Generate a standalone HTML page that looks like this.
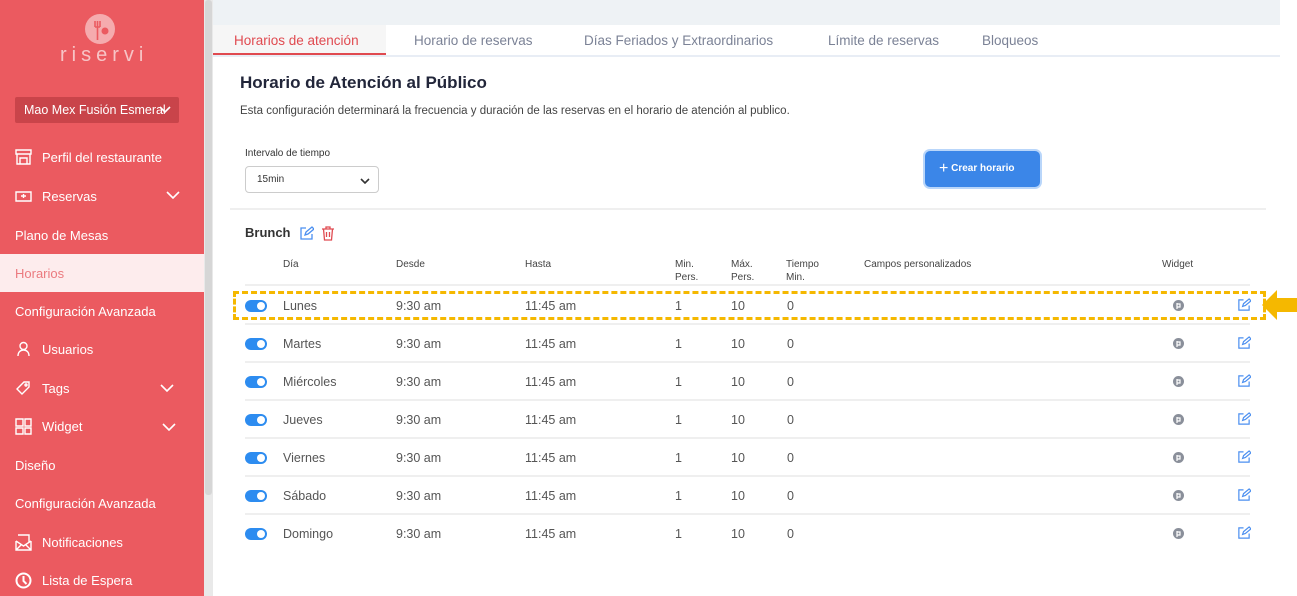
<!DOCTYPE html>
<html><head><meta charset="utf-8"><style>
*{box-sizing:border-box;margin:0;padding:0}
body{width:1297px;height:596px;overflow:hidden;background:#fff;font-family:"Liberation Sans",sans-serif;position:relative;color:#2b2d42}
.sb{position:absolute;left:0;top:0;width:204px;height:596px;background:#eb5a60}
.abs{position:absolute}
.si{position:absolute;left:15px;color:#fff;font-size:13px;display:flex;align-items:center;height:20px}
.si svg{margin-right:10px}
.chev{position:absolute;left:166px;}
.scr{position:absolute;left:204px;top:0;width:9px;height:596px;background:#e9e9e9}
.top{position:absolute;left:213px;top:0;width:1067px;height:25px;background:#eef2f5}
.tab{position:absolute;top:33px;font-size:13.5px;color:#7b8296}
.row{position:absolute;left:245px;width:1005px;height:38px;border-bottom:2px solid #efefef;font-size:12.5px;color:#555}
.row.last{border-bottom:none}
.row span{position:absolute;top:12px}
.tg{position:absolute;left:0;top:13px;width:22px;height:12px;border-radius:6px;background:#2d8cf0}
.tg:after{content:"";position:absolute;right:2px;top:2px;width:8px;height:8px;border-radius:50%;background:#fff}
.th{position:absolute;font-size:10px;color:#444;line-height:13px}
</style></head><body>
<div class="sb">
 <svg class="abs" style="left:85px;top:14px" width="30" height="30" viewBox="0 0 30 30"><circle cx="15" cy="15" r="15" fill="#f5abae"/><path d="M10 7v6M12.5 7v6M15 7v6M10 13h5M12.5 13v13" stroke="#eb5a60" stroke-width="1.6" fill="none"/><circle cx="20" cy="17" r="3.5" fill="#eb5a60"/></svg>
 <div class="abs" style="left:60px;top:44px;color:#f7c4c6;font-size:20px;letter-spacing:5px">riservi</div>
 <div class="abs" style="left:15px;top:97px;width:164px;height:26px;background:#c9444a;border-radius:2px;color:#fff;font-size:12.5px;line-height:26px;padding-left:9px;white-space:nowrap;overflow:hidden">Mao Mex Fusión Esmeral<svg style="position:absolute;right:8px;top:9px" width="12" height="8"><path d="M1 1l5 5 5-5" stroke="#fff" stroke-width="1.6" fill="none"/></svg></div>
 <div class="si" style="top:147px"><svg width="17" height="16" viewBox="0 0 17 16" fill="none" stroke="#fff" stroke-width="1.4"><path d="M1 1h15v4H1zM2 5v10h13V5M5 9h7v6H5z"/></svg>Perfil del restaurante</div>
 <div class="si" style="top:186px"><svg width="17" height="14" viewBox="0 0 17 14" fill="none" stroke="#fff" stroke-width="1.4"><path d="M1 3h15v9H1zM6 7h5M8.5 5v4"/></svg>Reservas</div>
 <svg class="chev" style="top:191px" width="14" height="8"><path d="M1 1l6 6 6-6" stroke="#fff" stroke-width="1.6" fill="none"/></svg>
 <div class="si" style="top:225px">Plano de Mesas</div>
 <div class="abs" style="left:0;top:254px;width:204px;height:38px;background:#fdeced"></div>
 <div class="si" style="top:263px;color:#eb7a7f">Horarios</div>
 <div class="si" style="top:301px">Configuración Avanzada</div>
 <div class="si" style="top:339px"><svg width="17" height="16" viewBox="0 0 17 16" fill="none" stroke="#fff" stroke-width="1.4"><circle cx="8.5" cy="5" r="3.5"/><path d="M3 15c0-4 2.5-6 5.5-6s5.5 2 5.5 6"/></svg>Usuarios</div>
 <div class="si" style="top:378px"><svg width="17" height="16" viewBox="0 0 17 16" fill="none" stroke="#fff" stroke-width="1.4"><path d="M9 2h5v5l-7 7-5-5z"/><circle cx="11" cy="5" r="1"/></svg>Tags</div>
 <svg class="chev" style="top:384px;left:160px" width="14" height="8"><path d="M1 1l6 6 6-6" stroke="#fff" stroke-width="1.6" fill="none"/></svg>
 <div class="si" style="top:416px"><svg width="17" height="17" viewBox="0 0 17 17" fill="none" stroke="#fff" stroke-width="1.4"><path d="M1 1h7v7H1zM10 1h6v7h-6zM1 10h7v6H1zM10 10h6v6h-6z"/></svg>Widget</div>
 <svg class="chev" style="top:423px;left:162px" width="14" height="8"><path d="M1 1l6 6 6-6" stroke="#fff" stroke-width="1.6" fill="none"/></svg>
 <div class="si" style="top:455px">Diseño</div>
 <div class="si" style="top:493px">Configuración Avanzada</div>
 <div class="si" style="top:532px"><svg width="17" height="17" viewBox="0 0 17 17" fill="none" stroke="#fff" stroke-width="1.4"><path d="M3 1h11v7M1 7v9h15V7M1 7l7.5 5L16 7M1 16l5-5M16 16l-5-5"/></svg>Notificaciones</div>
 <div class="si" style="top:570px"><svg width="17" height="17" viewBox="0 0 17 17" fill="none" stroke="#fff" stroke-width="2"><circle cx="8.5" cy="8.5" r="7"/><path d="M8.5 4v5l3 3"/></svg>Lista de Espera</div>
</div>
<div class="scr"><div class="abs" style="left:1px;top:0;width:7px;height:495px;background:#d6d6d6;border-radius:3px"></div></div>
<div class="top"></div>
<div class="abs" style="left:213px;top:55px;width:1067px;height:2px;background:#e8edf5"></div>
<div class="abs" style="left:213px;top:25px;width:173px;height:30px;background:#f6f6f6;border-bottom:2px solid #e04a50"></div>
<div class="tab" style="left:234px;color:#e04a50">Horarios de atención</div>
<div class="tab" style="left:414px">Horario de reservas</div>
<div class="tab" style="left:584px">Días Feriados y Extraordinarios</div>
<div class="tab" style="left:828px">Límite de reservas</div>
<div class="tab" style="left:982px">Bloqueos</div>
<div class="abs" style="left:240px;top:73px;font-size:17px;font-weight:bold;color:#22263a">Horario de Atención al Público</div>
<div class="abs" style="left:240px;top:105px;font-size:11.5px;color:#444">Esta configuración determinará la frecuencia y duración de las reservas en el horario de atención al publico.</div>
<div class="abs" style="left:245px;top:148px;font-size:10px;color:#333">Intervalo de tiempo</div>
<div class="abs" style="left:245px;top:166px;width:134px;height:27px;border:1px solid #ccc;border-radius:4px;font-size:10px;line-height:26px;padding-left:11px;color:#333">15min<svg class="abs" style="left:114px;top:11px" width="10" height="6"><path d="M1 1l4 4 4-4" stroke="#333" stroke-width="1.6" fill="none"/></svg></div>
<div class="abs" style="left:925px;top:151px;width:115px;height:36px;border-radius:5px;background:#3b86e8;box-shadow:0 0 0 2px #b9d6fa;color:#fff;font-size:10px;font-weight:bold;line-height:36px;padding-left:14px"><span style="font-size:16px;font-weight:normal;vertical-align:-2px">+</span> Crear horario</div>
<div class="abs" style="left:230px;top:208px;width:1036px;height:2px;background:#efefef"></div>
<div class="abs" style="left:245px;top:225px;font-size:13px;font-weight:bold;color:#333">Brunch</div>
<svg class="abs" style="left:299px;top:226px" width="15" height="15" viewBox="0 0 15 15" fill="none" stroke="#4b8ff0" stroke-width="1.3"><path d="M7 2H2v11h11V8M6 9l1-3 6-5 2 2-6 5z"/></svg>
<svg class="abs" style="left:321px;top:226px" width="14" height="15" viewBox="0 0 14 15" fill="none" stroke="#e04a50" stroke-width="1.3"><path d="M1 3h12M5 3V1h4v2M2.5 3l1 11h7l1-11M5.5 6v5M8.5 6v5"/></svg>
<div class="th" style="left:283px;top:258px">Día</div>
<div class="th" style="left:396px;top:258px">Desde</div>
<div class="th" style="left:525px;top:258px">Hasta</div>
<div class="th" style="left:675px;top:258px">Min.<br>Pers.</div>
<div class="th" style="left:731px;top:258px">Máx.<br>Pers.</div>
<div class="th" style="left:786px;top:258px">Tiempo<br>Min.</div>
<div class="th" style="left:864px;top:258px">Campos personalizados</div>
<div class="th" style="left:1162px;top:258px">Widget</div>
<div class="abs" style="left:245px;top:284px;width:1005px;height:2px;background:#efefef"></div>
<div id="rows"></div>
<div class="abs" style="left:233px;top:291px;width:1033px;height:29px;border:3px dashed #f5b800"></div>
<svg class="abs" style="left:1262px;top:290px" width="35" height="30" viewBox="0 0 35 30"><path d="M0 15L15 0v8h20v14H15v8z" fill="#f5b800"/></svg>
<script>
var d=["Lunes","Martes","Miércoles","Jueves","Viernes","Sábado","Domingo"],h="";
d.forEach(function(n,i){h+='<div class="row'+(i==6?' last':'')+'" style="top:'+(287+i*38)+'px"><div class="tg"></div><span style="left:38px">'+n+'</span><span style="left:151px">9:30 am</span><span style="left:280px">11:45 am</span><span style="left:430px">1</span><span style="left:486px">10</span><span style="left:542px">0</span><svg style="position:absolute;left:928px;top:13px" width="11" height="11"><circle cx="5.5" cy="5.5" r="5.5" fill="#8a8f9a"/><path d="M4 3v6M4 4h3v3H4" stroke="#fff" stroke-width="1.2" fill="none"/></svg><svg style="position:absolute;left:992px;top:11px" width="14" height="14" viewBox="0 0 15 15" fill="none" stroke="#4b8ff0" stroke-width="1.3"><path d="M7 2H2v11h11V8M6 9l1-3 6-5 2 2-6 5z"/></svg></div>'});
document.getElementById("rows").outerHTML=h;
</script>
</body></html>
